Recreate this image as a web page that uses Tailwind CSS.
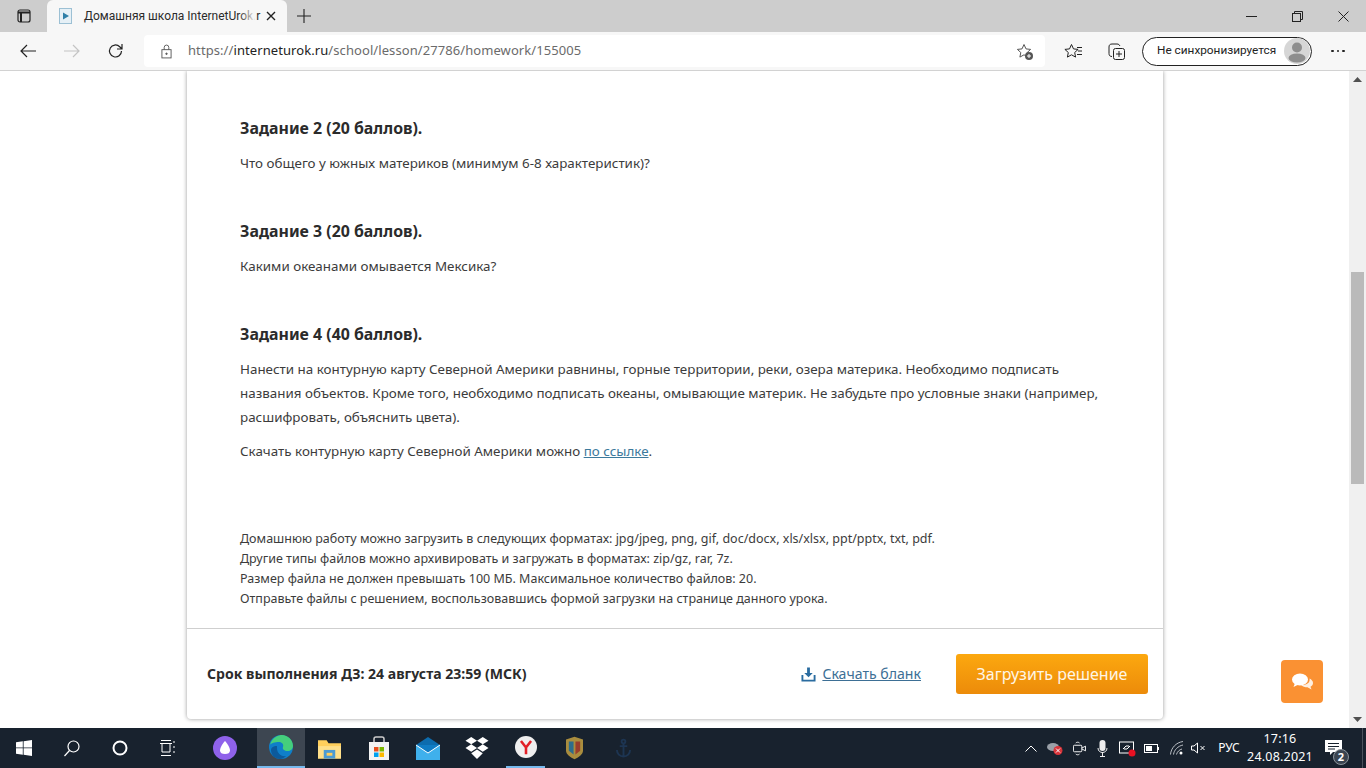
<!DOCTYPE html>
<html lang="ru">
<head>
<meta charset="UTF-8">
<title>Домашняя школа InternetUrok.ru</title>
<script src="https://cdn.jsdelivr.net/npm/@tailwindcss/browser@4"></script>
</head>
<body class="w-[1366px] h-[768px] overflow-hidden bg-white flex flex-col font-['Roboto',sans-serif]">

<!-- tab strip -->
<div class="h-8 shrink-0 bg-[#cdcdcd] flex items-end relative">
  <div class="w-[47px] h-8 flex items-center justify-center">
    <svg width="14" height="14" viewBox="0 0 14 14" fill="none" stroke="#222" stroke-width="1.2"><rect x="1" y="1" width="12" height="12" rx="2"/><path d="M1 3.5h12M4 3.5V13" stroke-width="2"/></svg>
  </div>
  <div class="w-[240px] h-[32px] bg-[#f7f7f7] rounded-t-md flex items-center pl-[12px] relative">
    <svg width="14" height="16" viewBox="0 0 14 16"><rect x="0.5" y="0.5" width="12" height="15" fill="#e6f0f6" stroke="#9cc0d4"/><path d="M4 4.5l6 3.5-6 3.5z" fill="#2f7fa8"/></svg>
    <span class="ml-[11px] w-[174px] whitespace-nowrap text-[12px] text-[#2b2b2b]">Домашняя школа InternetUrok.r</span>
    <div class="absolute left-[192px] top-0 w-[17px] h-[32px] bg-gradient-to-r from-transparent to-[#f7f7f7]"></div>
    <svg class="absolute left-[219px] top-[11px]" width="10" height="10" viewBox="0 0 10 10" stroke="#222" stroke-width="1.4"><path d="M1 1l8 8M9 1l-8 8"/></svg>
  </div>
  <div class="w-[34px] h-8 flex items-center justify-center">
    <svg width="14" height="14" viewBox="0 0 14 14" stroke="#222" stroke-width="1.1"><path d="M7 0v14M0 7h14"/></svg>
  </div>
  <div class="ml-auto flex items-center h-8">
    <div class="w-[46px] flex justify-center"><svg width="11" height="10" viewBox="0 0 11 10" stroke="#222"><path d="M0 5.5h11"/></svg></div>
    <div class="w-[46px] flex justify-center"><svg width="11" height="11" viewBox="0 0 11 11" fill="none" stroke="#222"><rect x="0.5" y="2.5" width="8" height="8"/><path d="M2.5 2.5v-2h8v8h-2"/></svg></div>
    <div class="w-[46px] flex justify-center"><svg width="11" height="11" viewBox="0 0 11 11" stroke="#222"><path d="M0.5 0.5l10 10M10.5 0.5l-10 10"/></svg></div>
  </div>
</div>

<!-- toolbar -->
<div class="h-[39px] shrink-0 bg-[#f7f7f7] border-b border-[#d2d2d2] flex items-center relative">
  <div class="w-[56px] flex justify-center">
    <svg width="16" height="14" viewBox="0 0 16 14" fill="none" stroke="#222" stroke-width="1.2"><path d="M16 7H1M7 1L1 7l6 6"/></svg>
  </div>
  <div class="w-[32px] flex justify-center">
    <svg width="16" height="14" viewBox="0 0 16 14" fill="none" stroke="#c4c4c4" stroke-width="1.2"><path d="M0 7h15M9 1l6 6-6 6"/></svg>
  </div>
  <div class="w-[56px] flex justify-center">
    <svg width="16" height="16" viewBox="0 0 16 16" fill="none" stroke="#222" stroke-width="1.2"><path d="M13.5 8a6 6 0 1 1-1.8-4.3L14 6M14 1v5H9"/></svg>
  </div>
  <div class="w-[901px] h-[32px] bg-white rounded-[4px] flex items-center relative">
    <svg class="ml-[17px]" width="11" height="15" viewBox="0 0 12 15" fill="none" stroke="#555"><rect x="1" y="5.5" width="10" height="9"/><path d="M3.5 5.5V3a2.5 2.5 0 0 1 5 0v2.5"/><circle cx="6" cy="10" r="0.8" fill="#555"/></svg>
    <span class="ml-[16px] text-[13px] text-[#6b6b6b] font-['Noto_Sans',sans-serif] tracking-[0.08px]">https://<span class="text-[#222]">interneturok.ru</span>/school/lesson/27786/homework/155005</span>
    <svg class="absolute right-[11px] top-[8px]" width="18" height="18" viewBox="0 0 18 18" fill="none"><path d="M8 1.5l2 4.4 4.6.5-3.4 3.1.9 4.6L8 11.8l-4.1 2.3.9-4.6L1.4 6.4 6 5.900z" stroke="#555"/><circle cx="13" cy="13" r="4" fill="#555"/><path d="M13 11v4M11 13h4" stroke="#fff"/></svg>
  </div>
  <div class="w-[55px] flex justify-center">
    <svg width="18" height="17" viewBox="0 0 18 17" fill="none" stroke="#222"><path d="M7.5 1.5l2 4.4 4.6.5-3.4 3.1.9 4.6-4.1-2.3-4.1 2.3.9-4.6L.9 6.4l4.6-.5zM13 4.5h5M14 8h4M13 11.5h5" /></svg>
  </div>
  <div class="w-[32px] flex justify-center">
    <svg width="17" height="17" viewBox="0 0 17 17" fill="none" stroke="#222"><rect x="5.5" y="5.5" width="11" height="11" rx="2"/><path d="M11 8v6M8 11h6M4 13.5c-2 0-3-1-3-3V4c0-2 1-3 3-3h5c1.5 0 2.5.7 2.8 2"/></svg>
  </div>
  <div class="ml-[10px] w-[170px] h-[29px] border border-[#222] rounded-full flex items-center justify-between pl-[14px] pr-[1px] bg-white">
    <span class="text-[11.8px] text-[#222] whitespace-nowrap">Не синхронизируется</span>
    <svg width="26" height="26" viewBox="0 0 26 26"><circle cx="13" cy="13" r="13" fill="#d6d6d6"/><circle cx="13" cy="9.5" r="5" fill="#8e8e8e"/><ellipse cx="13" cy="20" rx="8.5" ry="4.5" fill="#8e8e8e"/></svg>
  </div>
  <div class="w-[52px] flex justify-center gap-[3px]">
    <span class="w-[2.5px] h-[2.5px] rounded-full bg-[#222]"></span><span class="w-[2.5px] h-[2.5px] rounded-full bg-[#222]"></span><span class="w-[2.5px] h-[2.5px] rounded-full bg-[#222]"></span>
  </div>
</div>

<!-- viewport -->
<div class="flex-1 flex min-h-0 relative">
  <div class="flex-1 min-w-0 overflow-hidden pl-[187px]">
    <div class="w-[976px] h-[648px] bg-white rounded-b-[4px] shadow-[0_0_4px_rgba(0,0,0,0.4)] flex flex-col text-[#3c3c3c] font-['Noto_Sans',sans-serif]">
      <div class="h-[557px] pl-[53px] pr-[60px] pt-[45px] flex flex-col">
        <h3 class="text-[15.9px] leading-[24px] font-bold text-[#2b2b2b]">Задание 2 (20 баллов).</h3>
        <p class="text-[13.4px] leading-[24px] mt-[11px]">Что общего у южных материков (минимум 6-8 характеристик)?</p>
        <h3 class="text-[15.9px] leading-[24px] font-bold text-[#2b2b2b] mt-[44px]">Задание 3 (20 баллов).</h3>
        <p class="text-[13.4px] leading-[24px] mt-[11px]">Какими океанами омывается Мексика?</p>
        <h3 class="text-[15.9px] leading-[24px] font-bold text-[#2b2b2b] mt-[44px]">Задание 4 (40 баллов).</h3>
        <p class="text-[13.4px] leading-[24px] mt-[11px]">Нанести на контурную карту Северной Америки равнины, горные территории, реки, озера материка. Необходимо подписать названия объектов. Кроме того, необходимо подписать океаны, омывающие материк. Не забудьте про условные знаки (например, расшифровать, объяснить цвета).</p>
        <p class="text-[13.4px] leading-[24px] mt-[10px]">Скачать контурную карту Северной Америки можно <a class="text-[#3d7a9c] underline">по ссылке</a>.</p>
        <div class="mt-[66px] text-[12.5px] leading-[20px]">
          <p>Домашнюю работу можно загрузить в следующих форматах: jpg/jpeg, png, gif, doc/docx, xls/xlsx, ppt/pptx, txt, pdf.</p>
          <p>Другие типы файлов можно архивировать и загружать в форматах: zip/gz, rar, 7z.</p>
          <p>Размер файла не должен превышать 100 МБ. Максимальное количество файлов: 20.</p>
          <p>Отправьте файлы с решением, воспользовавшись формой загрузки на странице данного урока.</p>
        </div>
      </div>
      <div class="flex-1 border-t border-[#cfcfcf] flex items-center pl-[20px] pr-[15px]">
        <span class="text-[14.05px] font-bold text-[#2b2b2b]">Срок выполнения ДЗ: 24 августа 23:59 (МСК)</span>
        <a class="ml-auto flex items-center gap-[6px] text-[14.1px] text-[#3d6f95]">
          <svg width="15" height="16" viewBox="0 0 16 16" fill="#2a6ca0"><path d="M6.5 1h3v6h3L8 11.5 3.5 7h3z"/><path d="M0.5 9h2v5h11V9h2v7h-15z"/></svg>
          <span class="underline">Скачать бланк</span>
        </a>
        <button class="ml-[35px] w-[192px] h-[40px] rounded-[3px] bg-gradient-to-b from-[#fca80f] to-[#ec8b0a] text-[#fff6e6] text-[16px]">Загрузить решение</button>
      </div>
    </div>
  </div>
  <!-- scrollbar -->
  <div class="w-[17px] shrink-0 bg-[#f0f0f0] flex flex-col items-center justify-between py-[6px] relative">
    <svg width="9" height="5" viewBox="0 0 9 5"><path d="M0 5l4.5-5 4.5 5z" fill="#505050"/></svg>
    <div class="absolute top-[201px] left-[2px] w-[13px] h-[212px] bg-[#bababa]"></div>
    <svg width="9" height="5" viewBox="0 0 9 5"><path d="M0 0l4.5 5 4.5-5z" fill="#505050"/></svg>
  </div>
  <!-- chat button -->
  <div class="absolute left-[1281px] top-[589px] w-[42px] h-[43px] rounded-[4px] bg-[#fa9133] flex items-center justify-center">
    <svg width="21" height="17" viewBox="0 0 21 17" fill="#fff"><ellipse cx="8" cy="6.5" rx="8" ry="6"/><path d="M3 10l-1.5 4 5-2.5z"/><path d="M17.5 5.5c2 1 3.5 2.5 3.5 4.5 0 1.8-1 3-2.5 3.8l1 2.7-4-2.2c-2.5 0-5-.8-6.5-2.3 5 .5 9.5-2 8.500-6.500z" opacity="0.85"/></svg>
  </div>
</div>

<!-- taskbar -->
<div class="h-[40px] shrink-0 bg-[#18222e] flex items-center text-white relative">
  <div class="w-[48px] flex justify-center">
    <svg width="16" height="16" viewBox="0 0 16 16" fill="#fff"><path d="M0 2.3l6.8-1v6.2H0zM7.6 1.2L16 0v7.5H7.6zM0 8.3h6.8v6.4l-6.8-1zM7.6 8.3H16V16l-8.4-1.2z"/></svg>
  </div>
  <div class="w-[48px] flex justify-center">
    <svg width="16" height="17" viewBox="0 0 16 17" fill="none" stroke="#fff" stroke-width="1.2"><circle cx="9.5" cy="6.5" r="5.5"/><path d="M5.5 10.5L0.5 16"/></svg>
  </div>
  <div class="w-[48px] flex justify-center">
    <svg width="16" height="16" viewBox="0 0 16 16" fill="none" stroke="#fff" stroke-width="2"><circle cx="8" cy="8" r="6.5"/></svg>
  </div>
  <div class="w-[48px] flex justify-center">
    <svg width="16" height="16" viewBox="0 0 16 16" fill="none" stroke="#fff"><path d="M1 0.5h10M1 15.5h10M2 3.5h8v8.5H2zM0 3.5h2M10 3.5h2M14 1v2M14 6v2M14 11v2"/></svg>
  </div>
  <div class="w-[65px] flex justify-center">
    <svg width="24" height="24" viewBox="0 0 24 24"><circle cx="12" cy="12" r="12" fill="#8f62ea"/><path d="M12 5c2.5 2.5 5 7 5 9.5 0 2.5-2 3.5-5 3.5s-5-1-5-3.5C7 12 9.500 7.500 12 5z" fill="#fff"/></svg>
  </div>
  <div class="w-[48px] h-[40px] bg-[#3d4651] border-b-[2px] border-[#76b9ed] flex justify-center items-center">
    <svg width="24" height="24" viewBox="0 0 24 24"><circle cx="12" cy="12" r="12" fill="#0f7fc9"/><path d="M1 10C3 2 10 0 13 0c6 0 11 5 11 11 0 3-2.5 5-5.5 5S13 14 14 12c1-2.5-1-5-4-5-4 0-8 1-9 3z" fill="#45cf7c"/><path d="M8 13c0 5 4 9 9 8-2 2-4 3-6 3-5 0-9-4-9-9 0-2 2-4 6-4z" fill="#0c5a9c"/></svg>
  </div>
  <div class="w-[49px] flex justify-center">
    <svg width="23" height="21" viewBox="0 0 24 21"><path d="M0 2h9l2 3h13v16H0z" fill="#ffcf5c"/><path d="M0 8h24v13H0z" fill="#ffe08a"/><rect x="6" y="12" width="12" height="9" fill="#4b9bd4"/><rect x="9" y="15" width="6" height="3" fill="#ffcf5c"/></svg>
  </div>
  <div class="w-[49px] flex justify-center">
    <svg width="22" height="24" viewBox="0 0 20 24"><path d="M5 6V3a2 2 0 0 1 2-2h6a2 2 0 0 1 2 2v3" fill="none" stroke="#ccc" stroke-width="1.5"/><rect y="6" width="20" height="18" fill="#f4f4f4"/><rect x="5" y="11" width="4.5" height="4.5" fill="#e8501f"/><rect x="10.5" y="11" width="4.5" height="4.5" fill="#7cb800"/><rect x="5" y="16.5" width="4.5" height="4.5" fill="#00a1ee"/><rect x="10.5" y="16.5" width="4.5" height="4.5" fill="#fdb900"/></svg>
  </div>
  <div class="w-[49px] flex justify-center">
    <svg width="24" height="23" viewBox="0 0 24 23"><path d="M0 8L12 0l12 8v15H0z" fill="#0c6cae"/><path d="M0 8h24v15H0z" fill="#3fb0ec"/><path d="M0 8l12 8 12-8" fill="#0f7cc4"/><path d="M0 8l12 8 12-8" fill="none" stroke="#fff" stroke-width="1"/></svg>
  </div>
  <div class="w-[49px] flex justify-center">
    <svg width="24" height="22" viewBox="0 0 22 21" fill="#fff"><path d="M5.5 0L11 3.5 5.5 7 0 3.5zM16.5 0L22 3.5 16.5 7 11 3.5zM0 10.5L5.5 7 11 10.5 5.5 14zM22 10.5L16.5 7 11 10.5 16.5 14zM5.5 15.5L11 12l5.5 3.5L11 21z"/></svg>
  </div>
  <div class="w-[49px] h-[40px] px-[5px] flex">
    <div class="w-full h-[40px] border-b-[2px] border-[#76b9ed] flex justify-center items-center">
      <svg width="22" height="24" viewBox="0 0 24 24"><circle cx="12" cy="12" r="12" fill="#efefef"/><path d="M6.5 5.5L12 12.5l5.5-7M12 12.5V20" fill="none" stroke="#e21f26" stroke-width="2.8"/></svg>
    </div>
  </div>
  <div class="w-[49px] flex justify-center">
    <svg width="17" height="24" viewBox="0 0 18 24"><path d="M0 3l9-3 9 3v12c0 4-5 7-9 9-4-2-9-5-9-9z" fill="#a98d3e"/><path d="M3 5h5v14l-5-4z" fill="#2d6d8c"/><path d="M10 5h5v10l-5 4z" fill="#9a3d2c"/></svg>
  </div>
  <div class="w-[49px] flex justify-center">
    <svg width="15" height="20" viewBox="0 0 16 20" fill="none" stroke="#1d3552" stroke-width="2"><circle cx="8" cy="3" r="2"/><path d="M8 5v14M4 8h8M1 12c0 4 3 7 7 7s7-3 7-7"/></svg>
  </div>

  <!-- tray -->
  <div class="ml-auto flex items-center h-[40px] pr-[17px]">
    <div class="w-[24px] flex justify-center"><svg width="12" height="7" viewBox="0 0 12 7" fill="none" stroke="#fff"><path d="M0.5 6.5L6 1l5.5 5.5"/></svg></div>
    <div class="w-[24px] flex justify-center"><svg width="16" height="14" viewBox="0 0 16 14"><ellipse cx="6" cy="6" rx="6" ry="4" fill="#9aa0a8"/><circle cx="11" cy="9.5" r="4.5" fill="#d8343a"/><path d="M9 7.5l4 4M13 7.5l-4 4" stroke="#fff"/></svg></div>
    <div class="w-[24px] flex justify-center"><svg width="13" height="17" viewBox="0 0 14 17" fill="none" stroke="#fff"><rect x="0.5" y="5" width="9" height="7" rx="1"/><path d="M9.5 8l4-2v5l-4-2M3 2.5c1-1 3-1 4 0M3 14.5c1 1 3 1 4 0"/></svg></div>
    <div class="w-[23px] flex justify-center"><svg width="11" height="17" viewBox="0 0 11 17"><rect x="2.5" y="0" width="6" height="11" rx="3" fill="#eee"/><path d="M1 8c0 6 9 6 9 0M5.5 12v4M3 16.5h5" fill="none" stroke="#eee"/></svg></div>
    <div class="w-[27px] flex justify-center"><svg width="17" height="17" viewBox="0 0 17 17" fill="none" stroke="#fff"><rect x="0.5" y="2" width="14" height="11"/><path d="M4 9l3-3h3M11 6l-3 3H5" stroke="#fff"/><circle cx="13" cy="13" r="3.5" fill="#e81123" stroke="none"/></svg></div>
    <div class="w-[21px] flex justify-center"><svg width="15" height="9" viewBox="0 0 15 9" fill="none" stroke="#fff"><rect x="0.5" y="0.5" width="13" height="8"/><rect x="2" y="2" width="6" height="5" fill="#fff" stroke="none"/><path d="M14.5 3v3"/></svg></div>
    <div class="w-[29px] flex justify-center"><svg width="14" height="14" viewBox="0 0 14 14" fill="none" stroke="#b9bec4"><path d="M0.5 13.5C1 7 6 1.5 13 0.5M3.5 13.5C4 9 8 5 13 4M6.5 13.5C7 11 9.5 8.5 12 8"/><circle cx="11" cy="12" r="1.5" fill="#fff" stroke="none"/></svg></div>
    <div class="w-[15px] flex justify-center"><svg width="15" height="12" viewBox="0 0 15 12" fill="none" stroke="#fff"><path d="M0.5 4h2.5l3.5-3v10L3 8H0.5zM9.5 4l4 4M13.5 4l-4 4"/></svg></div>
    <span class="ml-[6px] w-[34px] text-center text-[12px] text-white font-['Noto_Sans',sans-serif]">РУС</span>
    <div class="w-[68px] text-center text-[12.5px] leading-[18px] text-white font-['Noto_Sans',sans-serif] tracking-[0.2px]"><div>17:16</div><div>24.08.2021</div></div>
    <div class="relative ml-[11px] w-[24px] h-[28px]">
      <svg class="absolute left-0 top-[6px]" width="17" height="15" viewBox="0 0 17 15"><path d="M0 0h17v12H8l-3 3v-3H0z" fill="#fff"/><path d="M3 3.5h11M3 6.5h11M3 9h7" stroke="#18222e"/></svg>
      <span class="absolute left-[8px] top-[15px] w-[16px] h-[16px] rounded-full bg-[#3a4450] border border-[#8d949b] text-[11px] font-bold leading-[14px] text-center font-['Noto_Sans',sans-serif]">2</span>
    </div>
  </div>
  <div class="absolute right-[3px] top-0 w-px h-[40px] bg-[#4a525c]"></div>
</div>
</body>
</html>
